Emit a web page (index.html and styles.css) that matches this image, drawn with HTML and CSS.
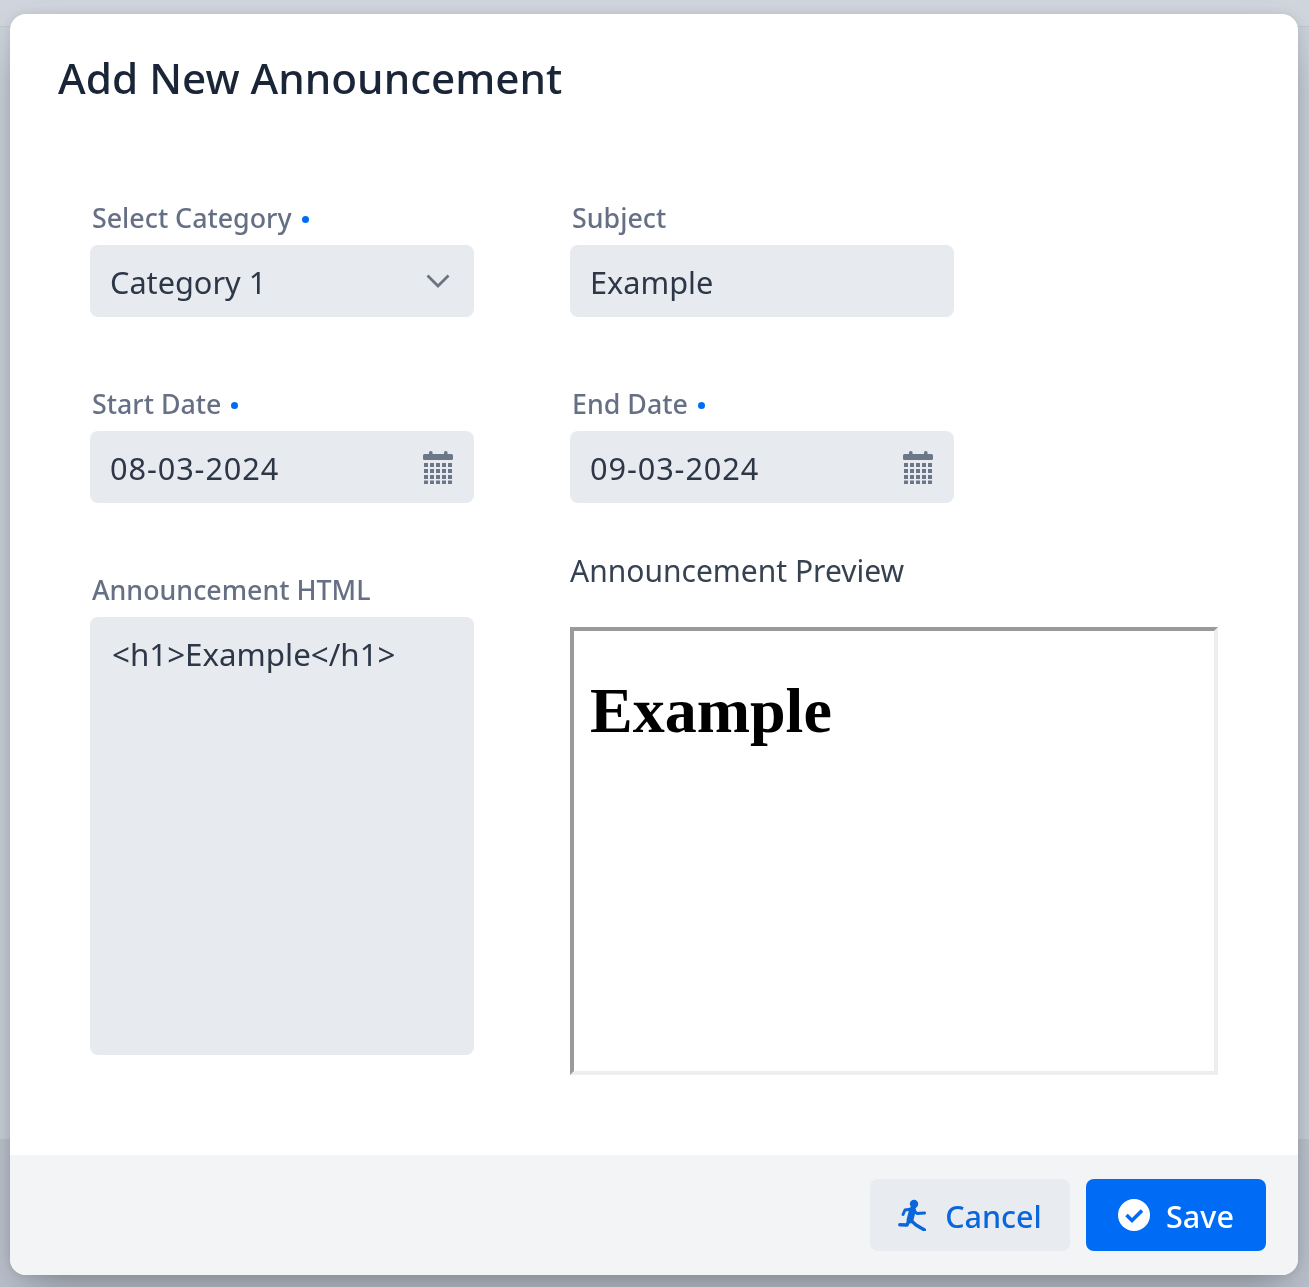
FILE: index.html
```html
<!DOCTYPE html>
<html lang="en">
<head>
    <meta charset="UTF-8">
    <meta name="viewport" content="width=device-width, initial-scale=1.0">
    <title>Add New Announcement</title>
    <link rel="stylesheet" href="styles.css">
</head>
<body>

<div class="page-behind">
    <div class="page-top"></div>
    <div class="page-main"></div>
    <div class="page-bottom"></div>
</div>

<div class="overlay">
    <form class="modal">
        <div class="modal-head">
            <h3 class="modal-title">Add New Announcement</h3>
        </div>

        <div class="modal-body">
            <div class="field">
                <label class="field-label">Select Category <span class="req"></span></label>
                <div class="field-box">
                    <span class="field-value">Category 1</span>
                    <svg class="chevron" viewBox="0 0 24 14" fill="none" stroke="#6b7280" stroke-width="2.8">
                        <path d="M1.5 1.5 12 12 22.5 1.5"/>
                    </svg>
                </div>
            </div>
            <div class="field">
                <label class="field-label">Subject</label>
                <div class="field-box">
                    <input class="field-input" type="text" value="Example">
                </div>
            </div>

            <div class="field">
                <label class="field-label">Start Date <span class="req"></span></label>
                <div class="field-box">
                    <input class="field-input field-date" type="text" value="08-03-2024">
                    <svg class="calendar" viewBox="0 0 30 33"><use href="#cal"/></svg>
                </div>
            </div>
            <div class="field">
                <label class="field-label">End Date <span class="req"></span></label>
                <div class="field-box">
                    <input class="field-input field-date" type="text" value="09-03-2024">
                    <svg class="calendar" viewBox="0 0 30 33"><use href="#cal"/></svg>
                </div>
            </div>

            <div class="field">
                <label class="field-label">Announcement HTML</label>
                <textarea class="field-area">&lt;h1&gt;Example&lt;/h1&gt;</textarea>
            </div>
            <div class="preview">
                <div class="preview-label">Announcement Preview</div>
                <div class="preview-frame">
                    <h1>Example</h1>
                </div>
            </div>
        </div>

        <div class="modal-foot">
            <button type="button" class="btn btn-cancel">
                <svg class="btn-icon" viewBox="0 0 28 32" fill="none" stroke="#0a66dc" stroke-linecap="round" stroke-linejoin="round">
                    <circle cx="16" cy="5" r="4.200" fill="#0a66dc" stroke="none"/>
                    <path d="M14 10 7 11 5 15.500" stroke-width="3"/>
                    <path d="M15 10.500 19 14.500 26.500 14" stroke-width="3"/>
                    <path d="M14.500 11 12 21" stroke-width="6.800"/>
                    <path d="M11 21.500 9 26 1.800 25.700" stroke-width="3.400"/>
                    <path d="M12.500 21 18 26 26.500 31" stroke-width="3.400"/>
                </svg>
                <span class="btn-text">Cancel</span>
            </button>
            <button type="button" class="btn btn-save">
                <svg class="btn-icon" viewBox="0 0 32 32">
                    <circle cx="16" cy="16" r="16" fill="#fff"/>
                    <path d="M8.500 16 14 21.500 24 11.500" fill="none" stroke="#006cf5" stroke-width="3.600"/>
                </svg>
                <span class="btn-text">Save</span>
            </button>
        </div>
    </form>
</div>

<!-- calendar icon shared by the date fields -->
<svg class="icon-defs" xmlns="http://www.w3.org/2000/svg">
    <defs>
        <g id="cal" fill="#6b7689">
            <rect x="0" y="3" width="30" height="6" rx="1.5"/>
            <rect x="6" y="0" width="3.5" height="5" rx="1.5"/>
            <rect x="21" y="0" width="3.5" height="5" rx="1.5"/>
            <path d="M1 12h4v4H1zM7 12h4v4H7zM13 12h4v4h-4zM19 12h4v4h-4zM25 12h4v4h-4z"/>
            <path d="M1 18h4v4H1zM7 18h4v4H7zM13 18h4v4h-4zM19 18h4v4h-4zM25 18h4v4h-4z"/>
            <path d="M1 24h4v4H1zM7 24h4v4H7zM13 24h4v4h-4zM19 24h4v4h-4zM25 24h4v4h-4z"/>
            <path d="M1 29.500h4v3.500H1zM7 29.500h4v3.500H7zM13 29.500h4v3.500h-4zM19 29.500h4v3.500h-4zM25 29.500h4v3.500h-4z"/>
        </g>
    </defs>
</svg>

</body>
</html>
```
FILE: styles.css
```css
* {
    box-sizing: border-box;
}
html, body {
    height: 100%;
}
body {
    margin: 0;
    font-family: "Noto Sans", Arial, sans-serif;
    overflow: hidden;
}
.icon-defs {
    position: absolute;
    width: 0;
    height: 0;
}

/* greyed out page under the dialog */
.page-behind {
    height: 100%;
    display: flex;
    flex-direction: column;
}
.page-top {
    height: 26px;
    background: #d0d5dd;
}
.page-main {
    flex: 1;
    background: #c9d0d8;
    border-top: 1px solid #bfc5ce;
}
.page-bottom {
    height: 148px;
    background: #bcc3ce;
}

.overlay {
    position: fixed;
    top: 14px;
    left: 10px;
}
.modal {
    width: 1288px;
    height: 1261px;
    display: flex;
    flex-direction: column;
    background: white;
    border-radius: 16px;
    overflow: hidden;
    box-shadow: 0 25px 50px -12px rgba(0, 0, 0, 0.3), 0 0 12px rgba(0, 0, 0, 0.1);
}
.modal-head {
    padding: 39px 48px 1px;
}
.modal-title {
    margin: 0;
    font-size: 42.3px;
    line-height: 50px;
    font-weight: 500;
    color: #1a2638;
}

.modal-body {
    display: grid;
    grid-template-columns: 384px 648px;
    column-gap: 96px;
    row-gap: 48px;
    padding: 75px 80px 0;
    flex: 1;
    align-content: start;
}
.field {
    padding-top: 28px;
}
.field-label {
    display: block;
    height: 38px;
    padding-left: 2px;
    font-size: 26.8px;
    line-height: 22px;
    font-weight: 500;
    color: #667085;
}
.req {
    display: inline-block;
    width: 7px;
    height: 7px;
    margin: 0 0 5px 3px;
    border-radius: 50%;
    background: #006cf5;
}
.field-box {
    width: 384px;
    height: 72px;
    display: flex;
    align-items: center;
    justify-content: space-between;
    padding: 2px 21px 0 20px;
    background: #e7eaef;
    border-radius: 8px;
}
.field-value,
.field-input {
    font-family: "Noto Sans", Arial, sans-serif;
    font-size: 30.7px;
    color: #2d3748;
}
.field-input {
    flex: 1;
    min-width: 0;
    padding: 0;
    border: none;
    outline: none;
    background: transparent;
}
.field-date {
    letter-spacing: 0.9px;
}
.field-area {
    display: block;
    width: 384px;
    height: 438px;
    padding: 16px 22px;
    border: none;
    outline: none;
    resize: none;
    background: #e7eaef;
    border-radius: 8px;
    font-family: "Noto Sans", Arial, sans-serif;
    font-size: 31.3px;
    color: #2d3748;
}
.chevron {
    width: 24px;
    height: 14px;
    margin: -2px 3px 0 0;
}
.calendar {
    width: 30px;
    height: 33px;
    flex-shrink: 0;
    margin-top: -2px;
}

.preview-label {
    height: 76px;
    font-size: 30px;
    line-height: 40px;
    color: #364152;
}
.preview-frame {
    width: 648px;
    height: 448px;
    padding: 0 16px;
    border-style: solid;
    border-width: 4px;
    border-color: #9a9a9a #eeeeee #eeeeee #9a9a9a;
}
.preview-frame h1 {
    margin: 43px 0 0;
    font-family: "Liberation Serif", "Times New Roman", serif;
    font-size: 64px;
    font-weight: bold;
    color: black;
}

.modal-foot {
    height: 120px;
    display: flex;
    justify-content: flex-end;
    align-items: center;
    gap: 16px;
    padding: 0 32px;
    background: #f3f4f6;
}
.btn {
    height: 72px;
    display: flex;
    align-items: center;
    justify-content: center;
    padding: 0;
    border: none;
    border-radius: 8px;
    font-family: "Noto Sans", Arial, sans-serif;
    font-size: 30.5px;
    font-weight: 500;
}
.btn-text {
    margin-top: 2px;
}
.btn-icon {
    flex-shrink: 0;
}
.btn-cancel {
    width: 200px;
    gap: 19px;
    background: #e8ebef;
    color: #0a66dc;
}
.btn-cancel .btn-icon {
    width: 28px;
    height: 32px;
}
.btn-save {
    width: 180px;
    gap: 16px;
    background: #006cf5;
    color: white;
}
.btn-save .btn-icon {
    width: 32px;
    height: 32px;
}
```
